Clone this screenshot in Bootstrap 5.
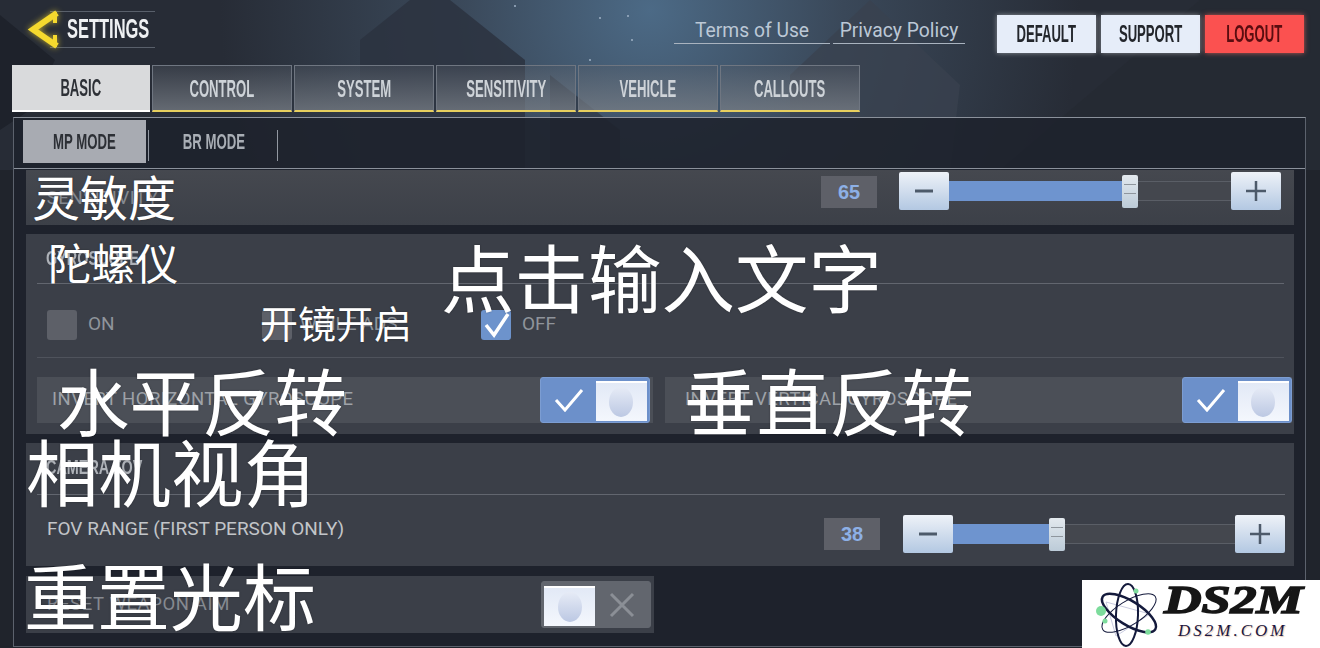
<!DOCTYPE html>
<html lang="zh">
<head>
    <meta charset="UTF-8">
    <meta name="viewport" content="width=device-width, initial-scale=1.0">
    <title>Settings</title>
    <link rel="stylesheet" href="https://cdn.jsdelivr.net/npm/bootstrap@5.3.0/dist/css/bootstrap.min.css">
    <script src="https://cdn.jsdelivr.net/npm/bootstrap@5.3.0/dist/js/bootstrap.bundle.min.js"></script>
    <style>
        html, body { height: 648px; overflow: hidden; }
        body {
            background: #20242c;
            font-family: "Roboto", "Liberation Sans", sans-serif;
            color: #c9ccd0;
        }
        .stage { width: 1320px; height: 648px; overflow: hidden; position: relative; }
        .backdrop { position: absolute; inset: 0; }
        .flow { position: relative; }
        /* no condensed face installed, so the game font is squeezed sideways */
        .narrow { font-family: "Liberation Sans", sans-serif; font-weight: 700; white-space: nowrap; }
        .squeeze { display: inline-block; flex: none; transform: scaleX(.57); }
        .squeeze.to-left { transform-origin: left center; }

        /* header */
        .top-bar { height: 65px; padding-left: 28px; padding-right: 15px; }
        .back-link { width: 128px; height: 65px; position: relative; }
        .back-lines { border-top: 1px solid #59606b; border-bottom: 1px solid #59606b; width: 105px; height: 37px; margin-left: 22px; margin-top: 11px; padding-left: 17px; }
        .back-title { color: #eef0f2; font-size: 27px; line-height: 34px; }
        .back-title .squeeze { transform: scaleX(.61); }
        .back-icon { position: absolute; left: -2px; top: 8px; filter: drop-shadow(0 0 3px rgba(245,217,46,.7)); }
        .legal { margin-left: 518px; padding-top: 15px; height: 44px; }
        .legal a { display: block; color: #bcc8d6; font-size: 19.300px; padding-top: 4px; line-height: 24px; text-decoration: none; border-bottom: 1px solid #a9b3bf; text-align: center; }
        .legal .terms { width: 156px; margin-right: 3px; }
        .legal .privacy { width: 132px; }
        .top-btns { margin-left: 32px; padding-top: 15px; gap: 5px; }
        .top-btns .btn { width: 99px; height: 38px; padding: 0; border: 0; border-radius: 0; background: #e6edf9; color: #23262c; font-size: 23px; line-height: 38px; box-shadow: 0 0 5px rgba(255,255,255,.45); }
        .top-btns .btn-danger { background: #fb5150; color: #5a0d10; box-shadow: 0 0 5px rgba(255,110,100,.7); }

        /* tabs */
        .game-tabs { margin-left: 12px; gap: 2px; height: 47px; }
        .game-tabs .nav-link {
            width: 140px; height: 47px; padding: 2px 0 0; line-height: 42px;
            color: #ced3d8; font-size: 23px;
            background: linear-gradient(rgba(85,92,103,.35), rgba(120,126,134,.75));
            border: 1px solid #6f7681; border-bottom: 2px solid #e7cf5e;
        }
        .game-tabs .nav-link.active { width: 138px; background: #d9dadc; color: #2d3036; border: 0; border-bottom: 2px solid #fff; }

        /* main panel */
        .panel { margin: 5px 14px 0 13px; height: 530px; background: rgba(30,34,44,.88); border: 1px solid #5c626d; border-top-color: #8b919b; }
        .mode-bar { height: 51px; padding: 2px 0 0 9px; border-bottom: 1px solid #8b919b; }
        .mode-tab { width: 123px; height: 43px; line-height: 43px; text-align: center; font-size: 22px; color: #a9aeb5; }
        .mode-tab .squeeze { transform: scaleX(.6); }
        .mode-tab.active { background: #a8abb2; color: #2c2f35; }
        .mode-sep { width: 1px; height: 31px; margin-top: 10px; background: #9298a1; }
        .mode-sep.first { margin-left: 2px; margin-right: 1px; }
        .mode-tab.second { width: 127px; }

        .sheet { margin-left: 12px; margin-right: 11px; background: #3b3f48; }
        .sheet-sens { margin-top: 1px; height: 55px; padding: 2px 13px 0 0; background: linear-gradient(#45484f, #3c4048); }
        .sheet-gyro { margin-top: 9px; height: 200px; padding: 0 10px 0 11px; }
        .sheet-cam { margin-top: 9px; height: 123px; padding: 0 9px 0 11px; }
        .sheet-reset { margin-top: 10px; height: 57px; width: 628px; padding: 0 3px 0 21px; }

        .sheet-title { height: 50px; line-height: 48px; padding-left: 9px; font-size: 20px; color: #aeb2b8; border-bottom: 1px solid #62666f; }
        .sheet-title .squeeze { transform: scaleX(.72); }
        .sheet-cam .sheet-title { height: 52px; }
        .choice-row { height: 74px; padding: 8px 0 0 10px; border-bottom: 1px solid #4f535c; }
        .choice { width: 215px; gap: 11px; font-size: 19px; color: #8f949b; }
        .choice.wide { width: 219px; gap: 8px; }
        .box { width: 30px; height: 30px; border-radius: 3px; background: #5d6068; }
        .box.on { background: #6d93cc; }
        .invert-row { margin-top: 19px; }
        .invert-cell { height: 46px; background: #4b4f57; font-size: 18.500px; color: #9ea2a8; padding-left: 15px; white-space: nowrap; letter-spacing: .5px; }
        .invert-cell.left { width: 616px; margin-right: 12px; padding-right: 3px; }
        .invert-cell.right { width: 627px; padding-left: 20px; margin-right: -12px; flex: none; }
        .fov-row { height: 77px; padding-left: 10px; font-size: 19px; color: #c2c5c9; }
        .fov-label { margin-top: -9px; }
        .fov-row .value-box { margin-right: 23px; }
        .flat-label { font-size: 18.500px; color: #868a91; letter-spacing: .6px; }

        /* toggle */
        .flip { width: 110px; height: 46px; border-radius: 3px; padding: 2px; background: #6c90ca; border: 1px solid #7c9dd2; }
        .flip-knob { width: 52px; height: 40px; margin-top: 1px; border-top: 2px solid #fff; background: linear-gradient(#e2e9f6, #f4f7fd); }
        .flip-dot { width: 24px; height: 30px; border-radius: 50%; background: linear-gradient(#e6ebf6, #bcc8e3); }
        .flip-tick { width: 54px; }
        .flip.off { background: #62666e; border-color: #62666e; height: 47px; }
        .flip.off .flip-knob { margin-top: 2px; height: 40px; }

        /* slider */
        .value-box { width: 56px; height: 32px; line-height: 32px; text-align: center; background: #5e6068; color: #8db0e6; font-weight: 700; font-size: 20px; font-family: "Liberation Sans", sans-serif; margin-right: 22px; }
        .slide { width: 382px; height: 38px; position: relative; }
        .step { width: 50px; height: 38px; border-radius: 2px; background: linear-gradient(#eef2f8, #b3c8e2); flex: none; }
        .slide-track { flex: 1; height: 20px; position: relative; background: #44474e; border-top: 1px solid #5a5e66; border-bottom: 1px solid #5a5e66; }
        .slide-fill { position: absolute; left: 0; top: -1px; bottom: -1px; background: #6e94cf; }
        .slide-thumb { position: absolute; top: -7px; width: 16px; height: 33px; border-radius: 2px; background: linear-gradient(#e3e9ee, #bccbd8); }
        .slide-thumb::after { content: ""; position: absolute; left: 2px; right: 2px; top: 9px; height: 10px; border-top: 1px solid #8f969d; border-bottom: 1px solid #8f969d; }

        /* big captions sitting on top of the screen */
        .cap { position: absolute; color: #fff; font-family: "Noto Sans CJK SC", sans-serif; font-weight: 400; line-height: 1; white-space: nowrap; text-shadow: 0 0 2px rgba(0,0,0,.35); }
        .cap-sens { left: 32px; top: 171px; font-size: 48px; }
        .cap-gyro { left: 48px; top: 240px; font-size: 43.500px; }
        .cap-hint { left: 441px; top: 239px; font-size: 73.500px; }
        .cap-ads { left: 260px; top: 303px; font-size: 38px; }
        .cap-hor { left: 57px; top: 363px; font-size: 72.500px; }
        .cap-ver { left: 684px; top: 363px; font-size: 72.500px; }
        .cap-fov { left: 26px; top: 434px; font-size: 72.500px; }
        .cap-rst { left: 24px; top: 557px; font-size: 73px; }

        /* watermark */
        .mark-box { position: absolute; left: 1082px; top: 580px; width: 238px; height: 68px; background: #fff; }
        .mark-atom { position: absolute; left: 0; top: 0; }
        .mark-word { position: absolute; left: 82px; top: -3px; font: italic 700 41px/44px "Liberation Serif", serif; color: #161616; -webkit-text-stroke: 1.600px #161616; transform: scaleX(1.27); transform-origin: left center; }
        .mark-url { position: absolute; left: 96px; top: 41px; font: italic 400 17px/20px "Liberation Serif", serif; color: #1c1640; letter-spacing: 3px; text-shadow: 1px 1px 1px #e8cdb8; }
    </style>
</head>
<body>
<div class="stage">
    <!-- backdrop -->
    <svg class="backdrop" width="1320" height="648" viewBox="0 0 1320 648">
        <defs>
            <radialGradient id="sky" cx="650" cy="10" r="430" gradientUnits="userSpaceOnUse">
                <stop offset="0" stop-color="#4c6a86"/>
                <stop offset=".45" stop-color="#3a4859"/>
                <stop offset="1" stop-color="#272c36"/>
            </radialGradient>
        </defs>
        <rect width="1320" height="170" fill="url(#sky)"/>
        <polygon points="0,15 55,60 30,110 0,130" fill="#1e222b"/>
        <polygon points="360,40 410,0 450,0 525,60 525,170 360,170" fill="#2c333f" opacity=".85"/>
        <polygon points="550,75 620,130 620,170 550,170" fill="#2e3643" opacity=".7"/>
        <polygon points="790,75 870,0 960,85 950,170 790,170" fill="#39424f" opacity=".75"/>
        <polygon points="1000,170 1200,0 1320,0 1320,170" fill="#262a33" opacity=".85"/>
        <circle cx="628" cy="16" r="1" fill="#9fb2c6"/><circle cx="600" cy="18" r="1" fill="#9fb2c6"/><circle cx="632" cy="40" r="1" fill="#9fb2c6"/><circle cx="590" cy="60" r="1" fill="#9fb2c6"/><circle cx="515" cy="6" r="1" fill="#9fb2c6"/>
    </svg>

    <div class="flow">
        <!-- header -->
        <header class="top-bar d-flex">
            <div class="back-link">
                <svg class="back-icon" width="36" height="44" viewBox="0 0 36 44">
                    <path d="M31 5 L7 21.500 L31 38" fill="none" stroke="#f5d92e" stroke-width="6"/>
                    <path d="M29 4 V15 M29 39 V27" fill="none" stroke="#f5d92e" stroke-width="4"/>
                </svg>
                <div class="back-lines"><div class="back-title narrow"><span class="squeeze to-left">SETTINGS</span></div></div>
            </div>
            <div class="legal d-flex">
                <a class="terms" href="#">Terms of Use</a>
                <a class="privacy" href="#">Privacy Policy</a>
            </div>
            <div class="top-btns d-flex">
                <button class="btn narrow d-flex justify-content-center"><span class="squeeze">DEFAULT</span></button>
                <button class="btn narrow d-flex justify-content-center"><span class="squeeze">SUPPORT</span></button>
                <button class="btn btn-danger narrow d-flex justify-content-center"><span class="squeeze">LOGOUT</span></button>
            </div>
        </header>

        <!-- tabs -->
        <ul class="nav game-tabs narrow">
            <li class="nav-item"><a class="nav-link active d-flex justify-content-center" href="#"><span class="squeeze">BASIC</span></a></li>
            <li class="nav-item"><a class="nav-link d-flex justify-content-center" href="#"><span class="squeeze">CONTROL</span></a></li>
            <li class="nav-item"><a class="nav-link d-flex justify-content-center" href="#"><span class="squeeze">SYSTEM</span></a></li>
            <li class="nav-item"><a class="nav-link d-flex justify-content-center" href="#"><span class="squeeze">SENSITIVITY</span></a></li>
            <li class="nav-item"><a class="nav-link d-flex justify-content-center" href="#"><span class="squeeze">VEHICLE</span></a></li>
            <li class="nav-item"><a class="nav-link d-flex justify-content-center" href="#"><span class="squeeze">CALLOUTS</span></a></li>
        </ul>

        <main class="panel">
            <div class="mode-bar d-flex narrow">
                <div class="mode-tab active"><span class="squeeze">MP MODE</span></div>
                <div class="mode-sep first"></div>
                <div class="mode-tab second"><span class="squeeze">BR MODE</span></div>
                <div class="mode-sep"></div>
            </div>

            <section class="sheet sheet-sens d-flex align-items-start justify-content-end">
                <span class="flat-label me-auto align-self-center">&nbsp;&nbsp;&nbsp;&nbsp;SENSITIVITY</span>
                <div class="value-box mt-1">65</div>
                <div class="slide d-flex align-items-center">
                    <div class="step d-flex align-items-center justify-content-center"><svg width="22" height="22" viewBox="0 0 22 22"><path d="M2 11H20" stroke="#4d5a6a" stroke-width="3"/></svg></div>
                    <div class="slide-track"><div class="slide-fill" style="width:173px"></div><div class="slide-thumb" style="left:173px"></div></div>
                    <div class="step d-flex align-items-center justify-content-center"><svg width="22" height="22" viewBox="0 0 22 22"><path d="M1 11H21M11 1V21" stroke="#4d5a6a" stroke-width="2.500"/></svg></div>
                </div>
            </section>

            <section class="sheet sheet-gyro">
                <div class="sheet-title narrow"><span class="squeeze to-left">GYROSCOPE</span></div>
                <div class="choice-row d-flex align-items-center">
                    <div class="choice d-flex align-items-center"><span class="box"></span>ON</div>
                    <div class="choice wide d-flex align-items-center"><span class="box"></span>WHILE ADS</div>
                    <div class="choice d-flex align-items-center"><span class="box on d-flex align-items-center justify-content-center"><svg width="28" height="28" viewBox="0 0 28 28"><path d="M4 14 L12 24 L26 3" fill="none" stroke="#fff" stroke-width="3.500"/></svg></span>OFF</div>
                </div>
                <div class="invert-row d-flex">
                    <div class="invert-cell left d-flex align-items-center justify-content-between">
                        <span>INVERT HORIZONTAL GYROSCOPE</span>
                        <div class="flip d-flex"><span class="flip-tick d-flex align-items-center justify-content-center"><svg width="30" height="24" viewBox="0 0 30 24"><path d="M2 12 L11 22 L28 2" fill="none" stroke="#fff" stroke-width="3"/></svg></span><span class="flip-knob d-flex align-items-center justify-content-center"><span class="flip-dot"></span></span></div>
                    </div>
                    <div class="invert-cell right d-flex align-items-center justify-content-between">
                        <span>INVERT VERTICAL GYROSCOPE</span>
                        <div class="flip d-flex"><span class="flip-tick d-flex align-items-center justify-content-center"><svg width="30" height="24" viewBox="0 0 30 24"><path d="M2 12 L11 22 L28 2" fill="none" stroke="#fff" stroke-width="3"/></svg></span><span class="flip-knob d-flex align-items-center justify-content-center"><span class="flip-dot"></span></span></div>
                    </div>
                </div>
            </section>

            <section class="sheet sheet-cam">
                <div class="sheet-title narrow"><span class="squeeze to-left">CAMERA FOV</span></div>
                <div class="fov-row d-flex align-items-center justify-content-between">
                    <span class="fov-label">FOV RANGE (FIRST PERSON ONLY)</span>
                    <div class="d-flex align-items-center">
                        <div class="value-box">38</div>
                        <div class="slide d-flex align-items-center">
                            <div class="step d-flex align-items-center justify-content-center"><svg width="22" height="22" viewBox="0 0 22 22"><path d="M2 11H20" stroke="#4d5a6a" stroke-width="3"/></svg></div>
                            <div class="slide-track"><div class="slide-fill" style="width:96px"></div><div class="slide-thumb" style="left:96px"></div></div>
                            <div class="step d-flex align-items-center justify-content-center"><svg width="22" height="22" viewBox="0 0 22 22"><path d="M1 11H21M11 1V21" stroke="#4d5a6a" stroke-width="2.500"/></svg></div>
                        </div>
                    </div>
                </div>
            </section>

            <section class="sheet sheet-reset d-flex align-items-center justify-content-between">
                <span class="flat-label">RESET WEAPON AIM</span>
                <div class="flip off d-flex"><span class="flip-knob d-flex align-items-center justify-content-center"><span class="flip-dot"></span></span><span class="flip-tick d-flex align-items-center justify-content-center"><svg width="26" height="26" viewBox="0 0 26 26"><path d="M2 2 L24 24 M24 2 L2 24" stroke="#8b8f96" stroke-width="3"/></svg></span></div>
            </section>
        </main>
    </div>

    <!-- captions -->
    <div class="cap cap-sens">灵敏度</div>
    <div class="cap cap-gyro">陀螺仪</div>
    <div class="cap cap-hint">点击输入文字</div>
    <div class="cap cap-ads">开镜开启</div>
    <div class="cap cap-hor">水平反转</div>
    <div class="cap cap-ver">垂直反转</div>
    <div class="cap cap-fov">相机视角</div>
    <div class="cap cap-rst">重置光标</div>

    <!-- watermark -->
    <div class="mark-box">
        <svg class="mark-atom" width="82" height="68" viewBox="0 0 82 68">
            <polygon points="24,22 68,34 34,56" fill="none" stroke="#c9cbe0" stroke-width="1"/>
            <g fill="none" stroke="#141a3c">
                <ellipse cx="47" cy="33" rx="31" ry="12" transform="rotate(32 47 33)" stroke-width="2.500"/>
                <ellipse cx="47" cy="33" rx="31" ry="12" transform="rotate(-32 47 33)" stroke-width="1"/>
                <ellipse cx="45" cy="35" rx="31" ry="11" transform="rotate(92 45 35)" stroke-width="2"/>
            </g>
            <circle cx="19" cy="31" r="5" fill="#7ddc9c"/>
            <circle cx="23" cy="41" r="2.500" fill="#7ddc9c"/>
            <circle cx="54" cy="11" r="2.500" fill="#7ddc9c"/>
            <circle cx="66" cy="52" r="2.800" fill="#7ddc9c"/>
        </svg>
        <div class="mark-word">DS2M</div>
        <div class="mark-url">DS2M.COM</div>
    </div>
</div>
</body>
</html>
